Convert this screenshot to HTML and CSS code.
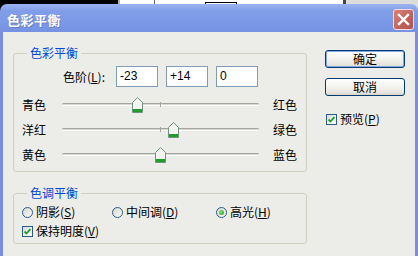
FILE: index.html
```html
<!DOCTYPE html>
<html lang="zh-CN">
<head>
<meta charset="utf-8">
<title>色彩平衡</title>
<link rel="stylesheet" href="styles.css">
</head>
<body>
<div class="desk">
  <span class="d-black"></span>
  <span class="d-sep"></span>
  <span class="d-white w34"></span>
  <span class="d-line"></span>
  <span class="d-white w50"></span>
  <span class="d-box"></span>
  <span class="d-white w106"></span>
  <span class="d-dark"></span>
  <span class="d-grey"></span>
</div>
<div class="dialog">
  <div class="titlebar">
    <span class="title">色彩平衡</span>
    <span class="close">
      <svg width="21" height="21" viewBox="0 0 21 21"><path d="M6 6 L15 15 M15 6 L6 15" stroke="#fff" stroke-width="2.4" stroke-linecap="square"/></svg>
    </span>
  </div>
  <div class="frame">
    <div class="main">
      <fieldset class="group g1">
        <legend>色彩平衡</legend>
        <div class="levels">
          <span class="lvl-label">色阶(<u>L</u>):</span>
          <span class="field">-23</span>
          <span class="field">+14</span>
          <span class="field">0</span>
        </div>
        <div class="slider-row">
          <span class="lab">青色</span>
          <div class="track"><span class="tick"></span>
            <svg class="thumb" style="left:70px" width="11" height="16" viewBox="0 0 11 16"><path d="M5.5 0.5 L10.5 5.5 V15.5 H0.5 V5.5 Z" fill="#f3f3ef" stroke="#6f9282"/><rect x="1" y="12" width="9" height="3" fill="#1f9c2a"/></svg>
          </div>
          <span class="lab">红色</span>
        </div>
        <div class="slider-row">
          <span class="lab">洋红</span>
          <div class="track"><span class="tick"></span>
            <svg class="thumb" style="left:106px" width="11" height="16" viewBox="0 0 11 16"><path d="M5.5 0.5 L10.5 5.5 V15.5 H0.5 V5.5 Z" fill="#f3f3ef" stroke="#6f9282"/><rect x="1" y="12" width="9" height="3" fill="#1f9c2a"/></svg>
          </div>
          <span class="lab">绿色</span>
        </div>
        <div class="slider-row">
          <span class="lab">黄色</span>
          <div class="track"><span class="tick"></span>
            <svg class="thumb" style="left:93px" width="11" height="16" viewBox="0 0 11 16"><path d="M5.5 0.5 L10.5 5.5 V15.5 H0.5 V5.5 Z" fill="#f3f3ef" stroke="#6f9282"/><rect x="1" y="12" width="9" height="3" fill="#1f9c2a"/></svg>
          </div>
          <span class="lab">蓝色</span>
        </div>
      </fieldset>
      <fieldset class="group g2">
        <legend>色调平衡</legend>
        <div class="radio-row">
          <span class="opt o1"><span class="radio"></span>阴影(<u>S</u>)</span>
          <span class="opt o2"><span class="radio"></span>中间调(<u>D</u>)</span>
          <span class="opt"><span class="radio on"><span class="dot"></span></span>高光(<u>H</u>)</span>
        </div>
        <div class="check-row">
          <span class="opt"><span class="check"><svg width="9" height="9" viewBox="0 0 9 9"><path d="M1.5 4.5 L3.5 6.5 L7.5 2" fill="none" stroke="#21a121" stroke-width="1.8"/></svg></span>保持明度(<u>V</u>)</span>
        </div>
      </fieldset>
    </div>
    <div class="side">
      <span class="btn default">确定</span>
      <span class="btn">取消</span>
      <span class="opt preview"><span class="check"><svg width="9" height="9" viewBox="0 0 9 9"><path d="M1.5 4.5 L3.5 6.5 L7.5 2" fill="none" stroke="#21a121" stroke-width="1.8"/></svg></span>预览(<u>P</u>)</span>
    </div>
  </div>
</div>
</body>
</html>
```

FILE: styles.css
```css
* { box-sizing: border-box; }
html, body { margin: 0; padding: 0; }
body {
  width: 418px;
  height: 256px;
  overflow: hidden;
  background: linear-gradient(to right, #000 118px, #dcdcdc 118px);
  font-family: "Noto Sans CJK SC", "Noto Sans", sans-serif;
  font-size: 12px;
  color: #000;
}
u { text-decoration: underline; text-underline-offset: 1px; }

.desk { display: flex; height: 4px; background: #fff; }
.desk span { display: block; height: 4px; flex: none; }
.d-black { width: 118px; background: #000; }
.d-sep { width: 2px; background: #b0b0b0; }
.d-white { background: #fff; }
.w34 { width: 34px; }
.w50 { width: 50px; }
.w106 { width: 106px; }
.d-line { width: 1px; background: #666; }
.desk .d-box { width: 32px; height: 2px; margin-top: 2px; border: 1px solid #000; border-bottom: none; background: #fff; }
.d-dark { width: 3px; background: #444; }
.desk .d-grey { flex: 1; background: #dcdcdc; }

.dialog { display: flex; flex-direction: column; height: 252px; }
.titlebar {
  height: 28px;
  display: flex;
  align-items: center;
  padding: 2px 4px 0 7px;
  border-radius: 7px 7px 0 0;
  background: linear-gradient(#9bb3f0, #809ee8 25%, #7a98e6 70%, #7593e2);
}
.title {
  color: #fff;
  font-weight: bold;
  font-size: 13px;
  letter-spacing: 0.5px;
  text-shadow: 1px 1px 0 #6a80c8;
}
.close {
  margin-left: auto;
  width: 21px;
  height: 21px;
  border: 1px solid #f2dcdc;
  border-radius: 3px;
  background: linear-gradient(135deg, #d9837b, #c0625a 60%, #b2524b);
  display: flex;
  align-items: center;
  justify-content: center;
}
.close svg { display: block; margin: -1px; }

.frame {
  flex: 1;
  display: flex;
  gap: 18px;
  padding: 14px 0 0 10px;
  background: #ecece8;
  border-left: 3px solid #7b8de0;
  border-right: 3px solid #7b8de0;
}
.main { width: 294px; display: flex; flex-direction: column; }

.group {
  margin: 0;
  min-width: 0;
  border: 1px solid #d0d0bf;
  border-radius: 3px;
  padding: 0;
}
.group legend {
  color: #0046d5;
  padding: 0 3px;
  margin-left: 13px;
  line-height: 14px;
  font-size: 12px;
}
.g1 { padding-bottom: 4px; }
.g2 { margin-top: 14px; padding-bottom: 3px; }

.levels {
  display: flex;
  align-items: center;
  height: 21px;
  margin: 6px 0 5px;
  padding-left: 49px;
}
.lvl-label { width: 53px; }
.field {
  width: 42px;
  height: 21px;
  margin-right: 8px;
  border: 1px solid #7f9db9;
  background: #fff;
  padding-left: 3px;
  font-family: "Liberation Sans", Arial, sans-serif;
  font-size: 12px;
  line-height: 19px;
}

.slider-row {
  display: flex;
  align-items: center;
  height: 25px;
  padding-left: 8px;
}
.lab { width: 24px; line-height: 14px; }
.track {
  position: relative;
  width: 197px;
  height: 3px;
  margin: 0 14px 0 16px;
  border-top: 1px solid #a5a59e;
  border-bottom: 1px solid #fff;
  background: #d8d8d2;
  border-radius: 2px;
}
.tick {
  position: absolute;
  left: 98px;
  top: -2px;
  width: 1px;
  height: 5px;
  background: #a5a59e;
}
.thumb { position: absolute; top: -7px; display: block; }

.radio-row {
  display: flex;
  align-items: center;
  height: 20px;
  margin-top: 2px;
  padding-left: 8px;
}
.check-row {
  display: flex;
  align-items: center;
  height: 18px;
  padding-left: 8px;
}
.opt { display: flex; align-items: center; line-height: 14px; }
.o1 { width: 90px; }
.o2 { width: 104px; }
.radio {
  width: 11px;
  height: 11px;
  margin-right: 3px;
  border: 1px solid #2a5b87;
  border-radius: 50%;
  background: linear-gradient(135deg, #d7d6cf, #fbfbf9);
  display: flex;
  align-items: center;
  justify-content: center;
}
.dot {
  width: 5px;
  height: 5px;
  border-radius: 50%;
  background: radial-gradient(circle at 35% 35%, #7be07a, #21a121);
}
.check {
  width: 11px;
  height: 11px;
  margin-right: 3px;
  border: 1px solid #2a5b87;
  background: linear-gradient(135deg, #dcdcd7, #fff);
  display: flex;
  align-items: center;
  justify-content: center;
}
.check svg { display: block; }

.side { display: flex; flex-direction: column; align-items: flex-start; padding-top: 4px; }
.btn {
  width: 80px;
  height: 18px;
  border: 1px solid #003c74;
  border-radius: 3px;
  background: linear-gradient(#ffffff, #f3f3ee 50%, #e3e2da 90%, #d6d0c5);
  display: flex;
  align-items: center;
  justify-content: center;
  line-height: 14px;
}
.btn + .btn { margin-top: 10px; }
.default { box-shadow: inset 0 0 0 1px #86a6e4; }
.preview { margin: 16px 0 0 1px; }
```
